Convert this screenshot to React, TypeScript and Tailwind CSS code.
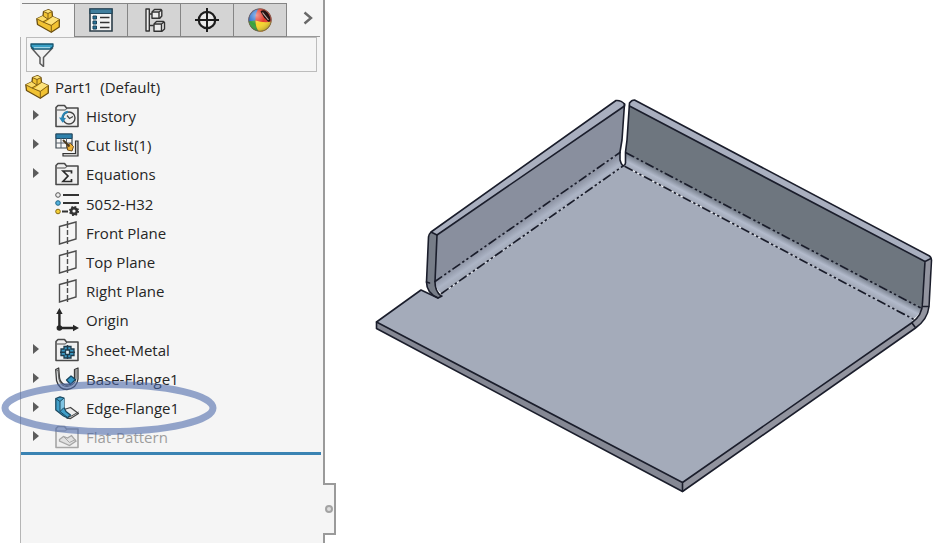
import { useState } from "react";
import type { ReactNode } from "react";

function PartIcon() {
  return (
    <svg viewBox="0 0 24 24" className="h-6 w-6 shrink-0" strokeLinejoin="round">
      <path d="m7.500 2.500 5-1.800L16 2.500l.5 5L23.300 10.500v7.500l-8 5.300L1.500 15.500.8 9.800 7 6.800Z" fill="#f1c232" stroke="#6b4f10" strokeWidth="1.300" />
      <path d="m7.500 2.500 5-1.800L16 2.500l-4 2Z" fill="#fde27a" />
      <path d="m.8 9.800 6.200-3 4.500 2.700-5.500 3Z" fill="#fbdb68" />
      <path d="m9.500 14 7-6.500 6.800 3-8 5Z" fill="#fde27a" />
      <path d="m7.500 2.500 4.500 2 4-2M12 4.500v5.700L7 6.800M.8 9.800 7 13l5-2.800 4.500-2.700M7 13l8.300 3.500 8-6M15.300 16.500v6.800" fill="none" stroke="#806017" strokeWidth="1" />
    </svg>
  );
}

function PropertiesIcon() {
  return (
    <svg viewBox="0 0 24 24" className="h-6 w-6" fill="none">
      <path d="M1 1h22v22H1z" fill="#f3f3f3" stroke="#2c3e49" strokeWidth="1.600" />
      <path d="M1 1h22v4.500H1z" fill="#3f7d9c" stroke="#24485c" strokeWidth="1.200" />
      <path d="M4 8h3.500v3H4zM4 13h3.500v3H4zM4 18h3.500v3H4z" fill="#27749a" stroke="#1d4258" />
      <path d="M11 9.500h9.500M11 14.500h9.500M11 19.500h9.500" stroke="#333" strokeWidth="1.500" />
    </svg>
  );
}

function ConfigIcon() {
  return (
    <svg viewBox="0 0 24 24" className="h-6 w-6" fill="none" stroke="#333" strokeWidth="1.400" strokeLinejoin="round">
      <path d="M4 1h3.300v22H4zM7.300 6H11M7.300 17.500h4.500" fill="#eee" />
      <path d="m10 4 2.500-2.500H19l.8 1V8l-2 2.300H10Z" fill="#ececec" />
      <path d="M10 4h7v6M17 4l2.500-2" />
      <path d="m12 16 2.500-2.500h7l1 1V21L20 23.300h-8Z" fill="#ececec" />
      <path d="M12 16h7.500v7M19.500 16l2.500-2" />
    </svg>
  );
}

function TargetIcon() {
  return (
    <svg viewBox="0 0 24 24" className="h-6 w-6" fill="none" stroke="#1c1c1c">
      <circle cx="12" cy="12" r="8.200" fill="#eaeaea" strokeWidth="2.200" />
      <path d="M12 0v24M0 12h24" strokeWidth="2" />
    </svg>
  );
}

function AppearanceIcon() {
  return (
    <svg viewBox="0 0 24 24" className="h-6 w-6">
      <defs>
        <clipPath id="ball">
          <circle cx="12" cy="12" r="11.500" />
        </clipPath>
        <radialGradient id="shine" cx=".35" cy=".3" r=".75">
          <stop offset="0" stopColor="#fff" stopOpacity=".5" />
          <stop offset=".5" stopColor="#fff" stopOpacity="0" />
          <stop offset="1" stopColor="#000" stopOpacity=".3" />
        </radialGradient>
      </defs>
      <g clipPath="url(#ball)">
        <path d="M0 0h24v24H0z" fill="#e23a2b" />
        <path d="M0 0h11Q7 5 7.500 12.500L0 14Z" fill="#2d72d0" />
        <path d="M0 13.500 7.500 12.500Q7.500 19 11 24H0Z" fill="#37a03a" />
        <path d="M7.500 12.500q8.500 3 16.500 1V24H11q-3.500-5-3.500-11.500Z" fill="#f6d52a" />
        <path d="M0 0h24v24H0z" fill="url(#shine)" />
      </g>
      <path d="M12.500 3.500Q14 1.500 17 2.500q5 3 5.500 9.500-.5 2.500-2.500 1.500l-4-4Z" fill="#241313" />
      <path d="m14.500 4.500 6 7.500" stroke="#c9aaa3" strokeWidth="1.200" />
      <circle cx="12" cy="12" r="11.300" fill="none" stroke="#6b6154" strokeWidth=".8" />
    </svg>
  );
}

function FunnelIcon() {
  return (
    <svg viewBox="0 0 24 24" className="h-6 w-6 shrink-0" strokeLinejoin="round">
      <path d="M1.500 5 10 14.500v6l3.500 3V14.500L22.500 5Z" fill="#f1f1f1" stroke="#5a5a5a" strokeWidth="1.500" />
      <path d="M1 1h22v2.500L20.500 6h-17L1 3.500Z" fill="#3aa0c6" stroke="#14546f" strokeWidth="1.300" />
      <path d="M4 4.700h16" stroke="#b6e0ee" />
    </svg>
  );
}

function Folder({ children, color = "#4a4a4a" }: { children: ReactNode; color?: string }) {
  return (
    <svg viewBox="0 0 24 24" className="h-6 w-6" fill="none">
      <path d="M1 22.500V3.500L3 1.500h6.500l2 2.500H23v18.500Z" fill="#f0f0f0" stroke={color} strokeWidth="1.600" strokeLinejoin="round" />
      <path d="M2 6h8.500l1.500-2" stroke={color} />
      {children}
    </svg>
  );
}

function HistoryIcon() {
  return (
    <Folder>
      <circle cx="14" cy="14" r="6" stroke="#444" strokeWidth="1.400" />
      <path d="M12 11.500 14.500 14.500l3.500-2" stroke="#444" strokeWidth="1.200" />
      <path d="M8.500 18A6.500 6.500 0 0 1 13 7.800" stroke="#2a86b5" strokeWidth="2" />
      <path d="m4 13.500 7 .5-3.500 4.500Z" fill="#2a86b5" />
    </Folder>
  );
}

function CutListIcon() {
  return (
    <svg viewBox="0 0 24 24" className="h-6 w-6" fill="none">
      <path d="M1 1h16v14H1z" fill="#f6f6f6" stroke="#3d4850" strokeWidth="1.200" />
      <path d="M1 1h16v4.500H1z" fill="#2f81ab" stroke="#1f4d68" />
      <path d="M1 10h16M6 5v10M11.500 5v10" stroke="#56606a" />
      <path d="M20.500 8H23v15H8v-2.500h12.500Z" fill="#ccc" stroke="#333" strokeWidth="1.200" />
      <path d="m12 12 3.500-1.500 3 3-1.500 4.500-4.500-1Z" fill="#eeb238" stroke="#6c4a18" />
      <path d="m8 7 6.500 6.500" stroke="#4c3a20" strokeWidth="2" />
    </svg>
  );
}

function EquationsIcon() {
  return (
    <Folder>
      <path d="M16.500 11.500V9H8l5 5-5 5.500h8.500V17" stroke="#2b2b2b" strokeWidth="1.700" />
    </Folder>
  );
}

function MaterialIcon() {
  return (
    <svg viewBox="0 0 24 24" className="h-6 w-6" fill="none">
      <path d="M8 3h16M8 11h16M7 19.500h6" stroke="#333" strokeWidth="2" />
      <circle cx="3" cy="3" r="2.300" fill="#eee" stroke="#555" />
      <circle cx="3" cy="11" r="2.300" fill="#54b2dd" stroke="#1f6485" />
      <circle cx="3" cy="19.500" r="2.300" fill="#f3cf37" stroke="#876a14" />
      <circle cx="19" cy="19" r="2.900" stroke="#333" strokeWidth="2.600" />
      <circle cx="19" cy="19" r="4.300" stroke="#333" strokeWidth="1.600" strokeDasharray="1.700 1.677" />
    </svg>
  );
}

function PlaneIcon() {
  return (
    <svg viewBox="0 0 24 24" className="h-6 w-6" fill="none" stroke="#4d4d4d" strokeWidth="1.400">
      <path d="M4.500 5.500 21 1v17L4.500 23Z" />
      <path d="M12.500 0v24" strokeDasharray="7 2 5 2" />
    </svg>
  );
}

function OriginIcon() {
  return (
    <svg viewBox="0 0 24 24" className="h-6 w-6" fill="#262626">
      <path d="M3.200 5h2.400v14H3.200zM4 18.800h16v2.400H4z" />
      <path d="m4.400 0 3.200 6H1.200ZM24 20l-6 3.200v-6.400Z" />
      <circle cx="4.400" cy="20" r="2.800" />
    </svg>
  );
}

function SheetMetalIcon() {
  return (
    <Folder>
      <path d="M9 8.500h7v2.500h3v6.500h-3V20H9v-2.500H6V11h3Z" fill="#3d9ac4" stroke="#203d4e" strokeWidth="1.300" />
      <path d="M12.500 7v14M5 14.200h15" stroke="#203d4e" strokeWidth="1.500" />
      <path d="M10.500 12h4v4.500h-4z" fill="#e9f2f6" stroke="#203d4e" strokeWidth="1.300" />
    </Folder>
  );
}

function BaseFlangeIcon() {
  return (
    <svg viewBox="0 0 24 24" className="h-6 w-6" strokeLinejoin="round">
      <path d="m.7 2.500 3-1.500.8 10q1 5 5 6.500 2 1 5 0 5-3 5-7V2.500l3.500-1.500v11q-1 9-11 10.500-8 0-10.500-9Z" fill="#e2e5e6" stroke="#3b3b3b" strokeWidth="1.300" />
      <path d="m.7 2.500 2.300 1 1 9q2 7 8 7 8-1 9-8V2.500" fill="none" stroke="#5a5a5a" />
      <path d="m11.500 13 4.500-4 4.500 3.500-5 5Z" fill="#2f97c7" stroke="#17455e" strokeWidth="1.300" />
    </svg>
  );
}

function EdgeFlangeIcon() {
  return (
    <svg viewBox="0 0 24 24" className="h-6 w-6" strokeLinejoin="round">
      <path d="m9 13.500 6.500-2 8 6-8 5-3.500-.5Z" fill="#ededed" stroke="#454545" strokeWidth="1.300" />
      <path d="m12 20 3.500.5 8-4.500" fill="none" stroke="#454545" />
      <path d="M.8 2.500 5 .8 9 2v9.500l2 4 4.500 3.500-3 2.800L8.500 20 .8 14Z" fill="#419fc9" stroke="#1c4a62" strokeWidth="1.300" />
      <path d="m5 5.500 4-3v9l-4 4Z" fill="#80c4e2" />
      <path d="m.8 2.500 4.200 3L9 2M5 5.500v10l7.500 6M5 15.500l4-4" fill="none" stroke="#1c4a62" />
    </svg>
  );
}

function FlatPatternIcon() {
  return (
    <Folder color="#a6a6a6">
      <path d="m4.500 14.500 4-3 4 1.500 4-2.500 4.500 5.500-6.500 4.500-10-4.500Z" fill="#e0e0e0" stroke="#a6a6a6" strokeWidth="1.300" />
      <path d="m8.500 11.500 6 6 6-3" stroke="#a6a6a6" />
    </Folder>
  );
}

function SheetMetalPart() {
  return (
    <svg viewBox="336 0 614 543" className="block h-auto w-full" strokeLinejoin="round" strokeLinecap="round" role="img" aria-label="Sheet metal part">
      <defs>
        <linearGradient id="bendLeft" gradientUnits="userSpaceOnUse" x1="530" y1="215" x2="537.500" y2="226">
          <stop offset="0" stopColor="#8a90a0" />
          <stop offset=".65" stopColor="#acb4c5" />
          <stop offset="1" stopColor="#a4abba" />
        </linearGradient>
        <linearGradient id="bendRight" gradientUnits="userSpaceOnUse" x1="773" y1="230" x2="767.500" y2="240.500">
          <stop offset="0" stopColor="#747c88" />
          <stop offset=".6" stopColor="#b2bacb" />
          <stop offset="1" stopColor="#a4abba" />
        </linearGradient>
      </defs>

      {/* base plate */}
      <path d="M376.500 322 421 290l17 8 4-4L623 166l290 153-1.500 4L682.500 482.500Z" fill="#a4abba" />
      <path d="M376.500 322 682.500 482.500v9L376.500 328.500Z" fill="#858894" />
      <path d="M682.500 482.500 911.500 323q8-5 9.500-13l1.500-10 2.500-38.500 6-3-2.500 48q-1.500 13-13.500 21.500L682.500 491.500Z" fill="#92949f" />

      {/* left flange */}
      <path d="m437 235 187.500-129-2.500 34-2 12.500L435 282Z" fill="#898f9e" />
      <path d="M435 281.500 620 152.500v8l3 5.500L441.500 293.500Q436 290 435 281.500Z" fill="url(#bendLeft)" />
      <path d="M431 232 616 100.500q5-.5 8.500 3.500v2L438 235Z" fill="#a9afbf" />
      <path d="M431 232q-2 2-2.500 5l-2 45q0 11 11.500 16l4-2q-7-5-7-14l2-47Z" fill="#777d88" />

      {/* right flange */}
      <path d="m629.500 106 295.500 155.500-3 42-1 4L625 152.500l1.500-12Z" fill="#6e767f" />
      <path d="m625 152 296.500 155.500q-2 8-8.500 11.500L625 166Z" fill="url(#bendRight)" />
      <path d="M629 106v-3q2-3 5-3l295 156q2 1.500 2 4l-6 1.500Z" fill="#a9afbf" />

      <path d="m624.500 104-2.500 36-2 12v8q1 4 3 6 2.500-1 2.500-3V152l1.500-12 2.500-37Z" fill="#fff" />

      <g fill="none" stroke="#1a1d2b" strokeWidth="1.600">
        <path d="M431 232 616 100.500q5-.5 8.500 3.500v2L437 235l-6-3q-2 2-2.500 5l-2 45q0 11 11.500 16l4-2" />
        <path d="m437 235-2 47q0 9 6 14M426.500 282l3 1" />
        <path d="m624.500 104-2.500 36-2 12v8q1 4 3 6 2.500-1 2.500-3V152l1.500-12 2.500-37q2-3 5-3l295 156q2 1.500 2 4l-2.500 46.500q-1.500 13-13.500 21.500L682.500 491.500l-306-163V322L421 290l17 8" />
        <path d="M629.500 106 925 261.500l6-3M925 261.500l-2.500 41q0 13-11 20.500L682.500 482.500 376.500 322M682.500 482.500v9M922 306.500h6.500M912 323l3 4" />
      </g>
      <g fill="none" stroke="#1a1d2b" strokeWidth="1.700" strokeDasharray="8 4 1 4 1 4">
        <path d="M435 281.500 620 152.500M441.500 293.500 623 166M626.500 153 920 307.500M625 166.500 913 319" />
      </g>
    </svg>
  );
}

const tabs = [
  { name: "FeatureManager", icon: <PartIcon /> },
  { name: "PropertyManager", icon: <PropertiesIcon /> },
  { name: "ConfigurationManager", icon: <ConfigIcon /> },
  { name: "DimXpertManager", icon: <TargetIcon /> },
  { name: "DisplayManager", icon: <AppearanceIcon /> },
];

const features = [
  { name: "History", icon: <HistoryIcon />, expandable: true },
  { name: "Cut list(1)", icon: <CutListIcon />, expandable: true },
  { name: "Equations", icon: <EquationsIcon />, expandable: true },
  { name: "5052-H32", icon: <MaterialIcon /> },
  { name: "Front Plane", icon: <PlaneIcon /> },
  { name: "Top Plane", icon: <PlaneIcon /> },
  { name: "Right Plane", icon: <PlaneIcon /> },
  { name: "Origin", icon: <OriginIcon /> },
  { name: "Sheet-Metal", icon: <SheetMetalIcon />, expandable: true },
  { name: "Base-Flange1", icon: <BaseFlangeIcon />, expandable: true },
  { name: "Edge-Flange1", icon: <EdgeFlangeIcon />, expandable: true, circled: true },
  { name: "Flat-Pattern", icon: <FlatPatternIcon />, expandable: true, suppressed: true },
];

function ManagerTabs() {
  const [active, setActive] = useState("FeatureManager");
  return (
    <div className="flex h-[37px] pt-[3px] pr-[3px] pl-[2px]">
      {tabs.map((tab) => (
        <button
          key={tab.name}
          aria-label={tab.name}
          onClick={() => setActive(tab.name)}
          className={
            active === tab.name
              ? "flex w-[53px] items-center justify-center border-t border-r border-[#858585] bg-[#f5f5f5]"
              : "flex w-[53px] items-center justify-center border-t border-r border-b border-[#858585] bg-[#d4d4d4]"
          }
        >
          {tab.icon}
        </button>
      ))}
      <button aria-label="More tabs" className="flex flex-1 items-center justify-center border-b border-[#999] pb-1 pl-2">
        <svg viewBox="0 0 12 16" className="h-4 w-3" fill="none" stroke="#686868" strokeWidth="2.400">
          <path d="m2.500 2.500 6.500 5.500-6.500 5.500" />
        </svg>
      </button>
    </div>
  );
}

function FeatureTree() {
  return (
    <ul className="grid h-[380px] auto-rows-fr text-[15px] leading-5 text-[#262626]">
      <li className="flex items-center gap-[6px] pl-1">
        <PartIcon />
        <span className="whitespace-pre">Part1  (Default)</span>
      </li>
      {features.map((feature) => (
        <li key={feature.name} className="relative flex items-center pl-2">
          {feature.expandable ? (
            <button aria-label={"Expand " + feature.name} className="mr-3 flex w-[14px] justify-center pb-[2px]">
              <svg viewBox="0 0 6 10" className="h-[10px] w-[6px]" fill="#5c5c5c">
                <path d="M0 0v10l6-5Z" />
              </svg>
            </button>
          ) : (
            <span className="mr-3 w-[14px]" />
          )}
          <span className="mr-[7px] shrink-0">{feature.icon}</span>
          <span className={feature.suppressed ? "text-[#9d9d9d]" : ""}>{feature.name}</span>
          {feature.circled && (
            <svg viewBox="0 0 216 56" className="pointer-events-none absolute top-1/2 -left-5 z-10 h-14 w-[216px] -translate-y-1/2" fill="none">
              <ellipse cx="108" cy="28" rx="104" ry="23.500" stroke="#4a68a8" strokeOpacity=".58" strokeWidth="7" />
            </svg>
          )}
        </li>
      ))}
    </ul>
  );
}

export default function App() {
  return (
    <div className="flex min-h-screen bg-white pl-5 font-['Open_Sans','Noto_Sans',sans-serif]">
      <aside className="flex w-[303px] shrink-0 flex-col bg-[#f5f5f5]">
        <ManagerTabs />
        <div className="flex flex-1 flex-col border-l border-[#b5b5b5]">
          <label className="mr-[6px] ml-[5px] flex h-[35px] items-center border border-[#bcbcbc] pl-[3px]">
            <FunnelIcon />
            <input type="text" aria-label="Filter features" className="h-full min-w-0 flex-1 bg-transparent px-2 text-[15px] outline-none" />
          </label>
          <FeatureTree />
          <div className="mr-[2px] h-[3px] bg-[#3a83b3]" />
        </div>
      </aside>

      {/* splitter with its grip */}
      <div className="flex w-[13px] shrink-0 flex-col">
        <div className="flex-1 border-l-2 border-[#9a9a9a]" />
        <button aria-label="Resize panel" className="flex h-[52px] items-center justify-center border-y-2 border-r-2 border-[#9a9a9a] bg-[#f5f5f5]">
          <span className="h-2 w-2 rounded-full border-2 border-[#a3a3a3] bg-[#ddd]" />
        </button>
        <div className="h-2 border-l-2 border-[#9a9a9a]" />
      </div>

      <main className="min-w-0 flex-1">
        <SheetMetalPart />
      </main>
    </div>
  );
}
